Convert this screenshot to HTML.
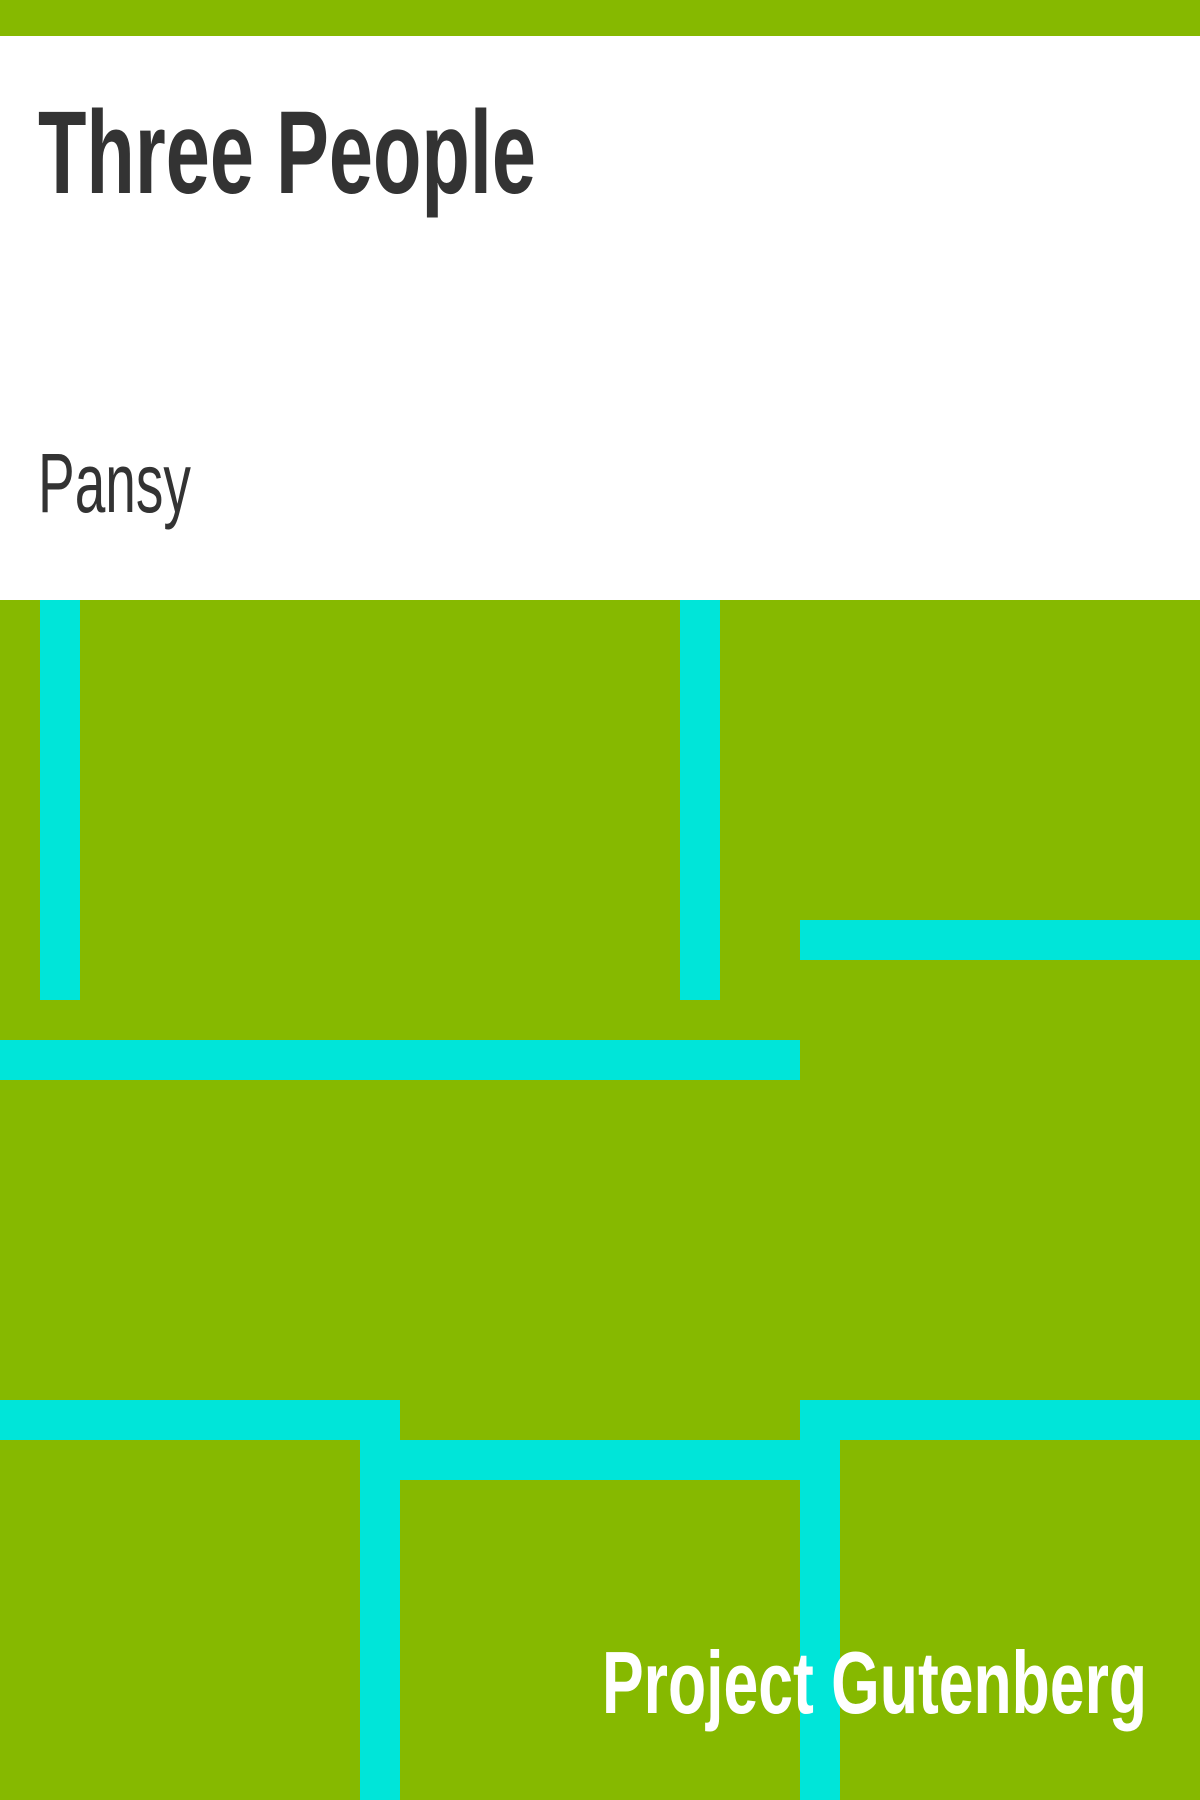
<!DOCTYPE html>
<html><head><meta charset="utf-8"><style>
html,body{margin:0;padding:0;}
body{width:1200px;height:1800px;position:relative;overflow:hidden;background:#86b900;font-family:"Liberation Sans",sans-serif;}
.w{position:absolute;left:0;top:36px;width:1200px;height:564px;background:#fff;}
.c{position:absolute;background:#00e5d9;}
.t{position:absolute;white-space:nowrap;transform-origin:0 0;line-height:1;}
</style></head><body>
<div class="w"></div>
<div class="t" style="left:38px;top:94px;font-size:118px;font-weight:bold;color:#333;transform:scaleX(0.672);">Three People</div>
<div class="t" style="left:38px;top:441px;font-size:84px;color:#333;transform:scaleX(0.655);">Pansy</div>
<div class="c" style="left:40px;top:600px;width:40px;height:400px"></div>
<div class="c" style="left:680px;top:600px;width:40px;height:400px"></div>
<div class="c" style="left:800px;top:920px;width:400px;height:40px"></div>
<div class="c" style="left:0;top:1040px;width:800px;height:40px"></div>
<div class="c" style="left:0;top:1400px;width:400px;height:40px"></div>
<div class="c" style="left:800px;top:1400px;width:400px;height:40px"></div>
<div class="c" style="left:360px;top:1400px;width:40px;height:400px"></div>
<div class="c" style="left:400px;top:1440px;width:400px;height:40px"></div>
<div class="c" style="left:800px;top:1400px;width:40px;height:400px"></div>
<div class="t" style="left:602px;top:1639px;font-size:88px;font-weight:bold;color:#fff;transform:scaleX(0.71);">Project Gutenberg</div>
</body></html>
